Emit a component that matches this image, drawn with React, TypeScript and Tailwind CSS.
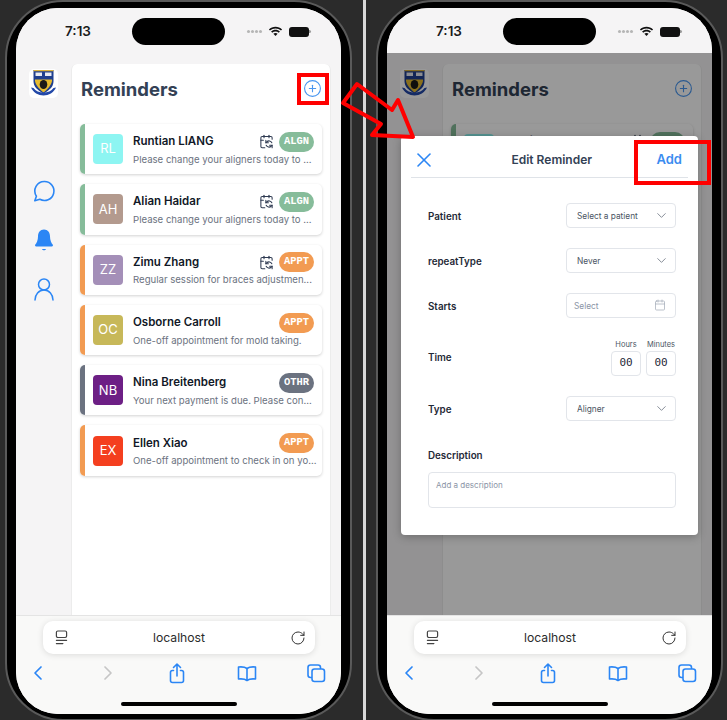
import { CalendarSync, Calendar, ChevronDown, ChevronLeft, ChevronRight, CirclePlus, RotateCw, X } from 'lucide-react';

type Reminder = {
  initials: string;
  name: string;
  text: string;
  tag: 'ALGN' | 'APPT' | 'OTHR';
  avatar: string;
  repeats?: boolean;
};

const reminders: Reminder[] = [
  { initials: 'RL', name: 'Runtian LIANG', text: 'Please change your aligners today to ...', tag: 'ALGN', avatar: 'bg-[#8df5f2]', repeats: true },
  { initials: 'AH', name: 'Alian Haidar', text: 'Please change your aligners today to ...', tag: 'ALGN', avatar: 'bg-[#b39a8e]', repeats: true },
  { initials: 'ZZ', name: 'Zimu Zhang', text: 'Regular session for braces adjustmen...', tag: 'APPT', avatar: 'bg-[#a48fb8]', repeats: true },
  { initials: 'OC', name: 'Osborne Carroll', text: 'One-off appointment for mold taking.', tag: 'APPT', avatar: 'bg-[#c7b859]' },
  { initials: 'NB', name: 'Nina Breitenberg', text: 'Your next payment is due. Please con...', tag: 'OTHR', avatar: 'bg-[#6d1f85]' },
  { initials: 'EX', name: 'Ellen Xiao', text: 'One-off appointment to check in on yo...', tag: 'APPT', avatar: 'bg-[#f43f1f]' },
];

const tagStyles = {
  ALGN: { strip: 'bg-[#86bc9a]', badge: 'bg-[#86bc9a]' },
  APPT: { strip: 'bg-[#f29b52]', badge: 'bg-[#f29b52]' },
  OTHR: { strip: 'bg-[#6b7280]', badge: 'bg-[#6b7280]' },
};

function Crest() {
  return (
    <div className="w-[29px] h-[29px] rounded-[5px] bg-white">
      <svg viewBox="0 0 29 29" className="w-[29px] h-[29px]">
        <path d="M4.500 1h20v11c0 6-4 9-10 12.500C8.500 21 4.500 18 4.500 12z" fill="#1f3f8f" />
        <path d="M4.500 1h20v1.200h-20z" fill="#d9b13b" />
        <path d="M6.500 3.500h6.500v3.500H6.500zM16 3.500h6.500v3.500H16z" fill="#e8ebf2" />
        <path d="M6 10.500h17c.5 4-3.500 9-8.500 13-5-4-9-9-8.500-13z" fill="#e6bb2f" />
        <ellipse cx="14.500" cy="15.500" rx="3.800" ry="4.500" fill="#1c1a17" />
        <path d="M2 18.500c2 5 7.500 8 12.500 8s10.500-3 12.500-8l-2.500.5c-2 3-6 4.500-10 4.500s-8-1.500-10-4.500z" fill="#2348a8" />
      </svg>
    </div>
  );
}

function Chat() {
  return (
    <svg viewBox="0 0 24 24" className="w-6 h-6" fill="none" stroke="currentColor" strokeWidth="1.600" strokeLinejoin="round">
      <path d="M12.500 2.500a9.500 9.500 0 1 1-4.700 17.800L2.800 21.800l1.600-4.600A9.500 9.500 0 0 1 12.500 2.500z" />
    </svg>
  );
}

function Bell() {
  return (
    <svg viewBox="0 0 24 24" className="w-6 h-6" fill="currentColor">
      <path d="M12 1.500c-3.900 0-6 3-6 6.800 0 4.200-1.300 6.600-2.700 8.300-.6.800-.2 1.900.9 1.900h15.600c1.100 0 1.500-1.100.9-1.900-1.400-1.700-2.700-4.100-2.700-8.300 0-3.800-2.100-6.800-6-6.800z" />
      <path d="M9.800 21c.6.900 1.300 1.300 2.200 1.300s1.600-.4 2.200-1.300z" />
    </svg>
  );
}

function Person() {
  return (
    <svg viewBox="0 0 24 24" className="w-6 h-6" fill="none" stroke="currentColor" strokeWidth="1.500" strokeLinecap="round">
      <circle cx="12" cy="7.500" r="5.500" />
      <path d="M3 23c0-5.500 3.800-10 9-10s9 4.500 9 10" />
    </svg>
  );
}

function Sidebar() {
  return (
    <aside className="w-[55px] shrink-0 pt-[16px] flex flex-col items-center">
      <Crest />
      <div className="mt-[81px] flex flex-col items-center gap-[25px] text-[#2b86f5]">
        <Chat />
        <Bell />
        <Person />
      </div>
    </aside>
  );
}

function ReminderCard({ item }: { item: Reminder }) {
  const tag = tagStyles[item.tag];
  return (
    <div className="flex h-[50.300px] w-[242px] rounded-[5px] bg-white overflow-hidden shadow-[0_1px_3px_rgba(0,0,0,0.18)]">
      <div className={`w-[5px] shrink-0 ${tag.strip}`} />
      <div className="flex flex-1 min-w-0 items-center pl-[8px] pr-[8px]">
        <div className={`w-[30px] h-[30px] shrink-0 rounded-[4px] flex items-center justify-center text-white text-[13px] ${item.avatar}`}>
          {item.initials}
        </div>
        <div className="ml-[10px] flex-1 min-w-0">
          <div className="flex items-center h-[20px]">
            <span className="flex-1 text-[11.500px] font-semibold text-[#111827] whitespace-nowrap">{item.name}</span>
            {item.repeats && <CalendarSync className="w-[15px] h-[15px] mr-[5px] text-[#2f3b52]" strokeWidth={1.7} />}
            <span className={`w-[35px] h-[20px] rounded-full flex items-center justify-center text-white text-[10.500px] font-bold font-['Liberation_Mono',monospace] ${tag.badge}`}>
              {item.tag}
            </span>
          </div>
          <p className="mt-[1px] text-[9.600px] leading-[14px] text-[#6b7280] whitespace-nowrap">{item.text}</p>
        </div>
      </div>
    </div>
  );
}

function RemindersPanel() {
  return (
    <main className="flex-1 mt-[11px] mr-[10px] bg-white rounded-t-[6px] border-l border-r border-[#ececec] pl-[8px]">
      <div className="flex items-center justify-between h-[50px] pl-[1px] pr-[8px]">
        <h1 className="pt-[1px] text-[18.500px] font-bold text-[#334155]">Reminders</h1>
        <CirclePlus className="w-[19px] h-[19px] mb-[2px] text-[#4a97f0]" strokeWidth={1.4} />
      </div>
      <div className="mt-[10px] flex flex-col gap-[10px]">
        {reminders.map((item) => (
          <ReminderCard key={item.initials} item={item} />
        ))}
      </div>
    </main>
  );
}

function StatusBar() {
  return (
    <div className="h-[45px] shrink-0 pt-[10px] grid grid-cols-[116px_93px_116px] bg-[#f5f4f5]">
      <span className="pl-[49px] pt-[3px] text-[13.500px] font-semibold text-[#1a1a1a]">7:13</span>
      <div className="h-[27px] rounded-full bg-black" />
      <div className="pl-[22px] flex items-center h-[27px] gap-[5px]">
        <div className="flex gap-[1.500px] mr-[1px]">
          <span className="w-[2.500px] h-[2.500px] rounded-full bg-[#b5b5b5]" />
          <span className="w-[2.500px] h-[2.500px] rounded-full bg-[#b5b5b5]" />
          <span className="w-[2.500px] h-[2.500px] rounded-full bg-[#b5b5b5]" />
          <span className="w-[2.500px] h-[2.500px] rounded-full bg-[#b5b5b5]" />
        </div>
        <svg viewBox="0 0 16 12" className="w-[15px] h-[11px]" fill="#111">
          <path d="M8 2.600c2.300 0 4.400.9 6 2.400l1.200-1.300C13.300 1.900 10.800.8 8 .8S2.700 1.900.8 3.700L2 5c1.600-1.500 3.700-2.400 6-2.400z" />
          <path d="M8 6c1.400 0 2.600.5 3.600 1.400l1.200-1.300C11.500 4.900 9.800 4.200 8 4.200s-3.500.7-4.800 1.900l1.200 1.300C5.400 6.500 6.600 6 8 6z" />
          <path d="M8 7.600c-.9 0-1.700.3-2.300.9L8 11l2.300-2.500c-.6-.6-1.400-.9-2.300-.9z" />
        </svg>
        <div className="flex items-center ml-[1px]">
          <div className="w-[20px] h-[10px] rounded-[3px] bg-[#111]" />
          <div className="w-[1.500px] h-[3px] ml-[0.500px] rounded-r-sm bg-[#999]" />
        </div>
      </div>
    </div>
  );
}

function SafariBar() {
  return (
    <div className="relative z-10 h-[99px] shrink-0 bg-[#f9f9f8] border-t border-[#e4e4e4]">
      <div className="mt-[5px] mx-[27px] h-[33px] w-[272px] rounded-[10px] bg-white shadow-[0_1px_6px_rgba(0,0,0,0.12)] flex items-center justify-between pl-[12px] pr-[9px]">
        <svg viewBox="0 0 14 16" className="w-[13px] h-[15px] text-[#444]" fill="none" stroke="currentColor" strokeWidth="1.300" strokeLinecap="round">
          <rect x="1.500" y="1" width="11" height="7" rx="1.500" />
          <path d="M1.500 11h11M1.500 14.500h7" />
        </svg>
        <span className="pt-[1px] text-[12.200px] text-[#2b2b2b]">localhost</span>
        <RotateCw className="w-[16px] h-[16px] text-[#333]" strokeWidth={1.500} />
      </div>
      <div className="mt-[7px] pl-[10px] pr-[13px] flex items-center justify-between text-[#2b86f5]">
        <ChevronLeft className="w-6 h-6" strokeWidth={1.700} />
        <ChevronRight className="w-6 h-6 text-[#c6c6c6]" strokeWidth={1.700} />
        <svg viewBox="0 0 24 24" className="w-6 h-6" fill="none" stroke="currentColor" strokeWidth="1.600" strokeLinecap="round" strokeLinejoin="round">
          <path d="M12 15V3M8.500 6.500L12 3l3.500 3.500" />
          <path d="M8.500 9.500H7.500a2 2 0 0 0-2 2v8a2 2 0 0 0 2 2h9a2 2 0 0 0 2-2v-8a2 2 0 0 0-2-2h-1" />
        </svg>
        <svg viewBox="0 0 24 24" className="w-6 h-6" fill="none" stroke="currentColor" strokeWidth="1.600" strokeLinejoin="round">
          <path d="M12 7.500C10 6 7 5.600 3.500 6v12c3.500-.4 6.500 0 8.500 1.500 2-1.500 5-1.900 8.500-1.500V6C17 5.600 14 6 12 7.500z" />
          <path d="M12 7.500v12" />
        </svg>
        <svg viewBox="0 0 24 24" className="w-6 h-6" fill="none" stroke="currentColor" strokeWidth="1.600">
          <rect x="8" y="8" width="12.500" height="12.500" rx="2.500" />
          <path d="M8 16.500H6.500a2.500 2.500 0 0 1-2.500-2.500V6.500A2.500 2.500 0 0 1 6.500 4H14a2.500 2.500 0 0 1 2.500 2.500V8" />
        </svg>
      </div>
      <div className="mt-[17px] mx-auto w-[116px] h-[4px] rounded-full bg-black" />
    </div>
  );
}

function Field({ label, children }: { label: string; children: React.ReactNode }) {
  return (
    <div className="flex items-center justify-between">
      <span className="pt-[4px] text-[9.800px] font-semibold text-[#1f2937]">{label}</span>
      {children}
    </div>
  );
}

function SelectBox({ value }: { value: string }) {
  return (
    <div className="w-[110px] h-[25px] rounded-[4px] border border-[#e2e5ea] flex items-center justify-between pl-[10px] pr-[6px] text-[8.300px] text-[#4b5563]">
      <span className="pt-[2px]">{value}</span>
      <ChevronDown className="w-[15px] h-[15px] text-[#6b7280]" strokeWidth={1.300} />
    </div>
  );
}

function TimeInput({ label }: { label: string }) {
  return (
    <div className="flex flex-col items-center">
      <span className="text-[7.500px] leading-[13px] text-[#4b5563]">{label}</span>
      <div className="w-[30px] h-[25px] rounded-[4px] border border-[#e2e5ea] flex items-center justify-center text-[11px] font-['DejaVu_Sans_Mono',monospace] text-[#1f2937]">
        00
      </div>
    </div>
  );
}

function EditDialog() {
  return (
    <div className="absolute left-[14px] top-[127.500px] w-[297px] h-[399px] rounded-[4px] bg-white shadow-[0_2px_8px_rgba(0,0,0,0.25)]">
      <div className="mx-[10px] h-[42px] pt-[8px] border-b border-[#dfe3e8] flex items-center justify-between pr-[6px] pl-[1px]">
        <X className="w-6 h-6 text-[#2b86f5]" strokeWidth={1.600} />
        <span className="ml-[11px] text-[12px] font-semibold text-[#334155]">Edit Reminder</span>
        <span className="text-[13px] font-semibold text-[#3b8cf0]">Add</span>
      </div>
      <div className="pl-[27px] pr-[22px] pt-[25px] flex flex-col gap-[20px]">
        <Field label="Patient"><SelectBox value="Select a patient" /></Field>
        <Field label="repeatType"><SelectBox value="Never" /></Field>
        <Field label="Starts">
          <div className="w-[110px] h-[25px] rounded-[4px] border border-[#e2e5ea] flex items-center justify-between pl-[7px] pr-[9px] text-[8.300px] text-[#8a94a6]">
            <span className="pt-[2px]">Select</span>
            <Calendar className="w-[12px] h-[12px] text-[#a5adba]" strokeWidth={1.500} />
          </div>
        </Field>
        <Field label="Time">
          <div className="flex gap-[5px]">
            <TimeInput label="Hours" />
            <TimeInput label="Minutes" />
          </div>
        </Field>
        <Field label="Type"><SelectBox value="Aligner" /></Field>
        <div className="mt-[7px]">
          <span className="block pt-[2px] text-[9.800px] font-semibold leading-[12px] text-[#1f2937]">Description</span>
          <div className="mt-[10px] h-[36px] rounded-[4px] border border-[#e2e5ea] px-[7px] pt-[6px] text-[8px] text-[#8a94a6]">
            Add a description
          </div>
        </div>
      </div>
    </div>
  );
}

function Phone({ dialog, className }: { dialog?: boolean; className: string }) {
  return (
    <div className={`w-[347px] h-[721px] shrink-0 rounded-[58px] border-2 border-[#5a5a5a] bg-black pt-[6px] px-[7px] ${className}`}>
      <div className="relative w-[325px] h-[706px] ml-[2px] rounded-[42px] overflow-hidden flex flex-col bg-[#f5f4f5] font-['Inter',sans-serif]">
        <StatusBar />
        <div className="flex-1 min-h-0 flex">
          <Sidebar />
          <RemindersPanel />
        </div>
        <SafariBar />
        {dialog && (
          <div className="absolute inset-x-0 top-[45px] bottom-[99px] bg-black/40" />
        )}
        {dialog && <EditDialog />}
      </div>
    </div>
  );
}

export default function App() {
  return (
    <div className="relative w-[727px] h-[720px] overflow-hidden flex bg-[#2b2b2b]">
      <div className="w-[363px] shrink-0 overflow-hidden">
        <Phone className="ml-[5px]" />
      </div>
      <div className="w-[3px] shrink-0 bg-[#d8d8d8]" />
      <div className="flex-1 overflow-hidden">
        <Phone dialog className="ml-[10px]" />
      </div>

      {/* red callouts drawn on top of the screenshots */}
      <div className="absolute left-[297px] top-[73px] w-[32px] h-[32px] border-[4px] border-[#ff0000]" />
      <div className="absolute left-[634px] top-[140px] w-[77px] h-[45px] border-[4.500px] border-[#ff0000]" />
      <svg className="absolute left-[335px] top-[75px] w-[90px] h-[70px]" viewBox="335 75 90 70" fill="none">
        <path d="M343 103L357 84L392 110L398 100L413 137L372 135L381 124z" stroke="#ff0000" strokeWidth="4" strokeLinejoin="round" />
      </svg>
    </div>
  );
}
